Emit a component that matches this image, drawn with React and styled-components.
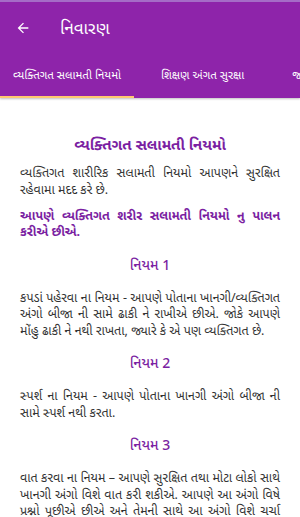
import React from "react";
import styled, { createGlobalStyle } from "styled-components";

const Global = createGlobalStyle`
  html, body {
    margin: 0;
    padding: 0;
    background: #ffffff;
  }
  body {
    font-family: "Noto Sans", "Noto Sans Gujarati", "Lohit Gujarati", sans-serif;
    width: 300px;
    height: 517px;
    overflow: hidden;
  }
`;

const tabs = ["વ્યક્તિગત સલામતી નિયમો", "શિક્ષણ અંગત સુરક્ષા", "જાતીય શોષણ"];

function App() {
  return (
    <Screen>
      <Global />
      <Header>
        <StatusStrip />
        <Toolbar>
          <BackButton aria-label="back">
            <svg width="16" height="16" viewBox="0 0 24 24">
              <path
                d="M20 11H7.83l5.59-5.59L12 4l-8 8 8 8 1.41-1.41L7.83 13H20v-2z"
                fill="#fff"
              />
            </svg>
          </BackButton>
          <Title>નિવારણ</Title>
        </Toolbar>
        <TabBar>
          {tabs.map((t, i) => (
            <Tab key={t} active={i === 0}>
              {t}
            </Tab>
          ))}
        </TabBar>
      </Header>
      <Content>
        <Heading>વ્યક્તિગત સલામતી નિયમો</Heading>
        <Para>
          વ્યક્તિગત શારીરિક સલામતી નિયમો આપણને સુરક્ષિત રહેવામા મદદ કરે છે.
        </Para>
        <Para strong>
          આપણે વ્યક્તિગત શરીર સલામતી નિયમો નુ પાલન કરીએ છીએ.
        </Para>
        <Heading small>નિયમ 1</Heading>
        <Para>
          કપડાં પહેરવા ના નિયમ - આપણે પોતાના ખાનગી/વ્યક્તિગત અંગો બીજા ની સામે
          ઢાકી ને રાખીએ છીએ. જોકે આપણે મોંહુ ઢાકી ને નથી રાખતા, જ્યારે કે એ પણ
          વ્યક્તિગત છે.
        </Para>
        <Heading small>નિયમ 2</Heading>
        <Para>
          સ્પર્શ ના નિયમ - આપણે પોતાના ખાનગી અંગો બીજા ની સામે સ્પર્શ નથી કરતા.
        </Para>
        <Heading small>નિયમ 3</Heading>
        <Para>
          વાત કરવા ના નિયમ – આપણે સુરક્ષિત તથા મોટા લોકો સાથે ખાનગી અંગો વિશે
          વાત કરી શકીએ. આપણે આ અંગો વિષે પ્રશ્નો પૂછીએ છીએ અને તેમની સાથે આ
          અંગો વિશે ચર્ચા કરીએ છીએ.
        </Para>
      </Content>
    </Screen>
  );
}

const Screen = styled.div`
  width: 300px;
  height: 517px;
  overflow: hidden;
  background: #fff;
`;

const Header = styled.header`
  background: #8e24aa;
  box-shadow: 0 1px 2px rgba(0, 0, 0, 0.25);
`;

const StatusStrip = styled.div`
  height: 2px;
  background: #a56cc7;
`;

const Toolbar = styled.div`
  height: 52px;
  display: flex;
  align-items: center;
  padding: 0 0 0 15px;
`;

const BackButton = styled.div`
  width: 16px;
  height: 16px;
  display: flex;
  align-items: center;
  justify-content: center;
  margin-right: 29px;
`;

const Title = styled.div`
  color: #fff;
  font-size: 17px;
`;

const TabBar = styled.div`
  height: 44px;
  display: flex;
  white-space: nowrap;
  overflow: hidden;
`;

const Tab = styled.div`
  flex: none;
  padding: 0 13px;
  width: ${(p) => (p.active ? "134px" : "auto")};
  box-sizing: border-box;
  display: flex;
  align-items: center;
  color: #fff;
  font-size: 11.5px;
  margin-right: ${(p) => (p.active ? "14px" : "22px")};
  border-bottom: 2px solid ${(p) => (p.active ? "#ffc870" : "transparent")};
`;

const Content = styled.main`
  padding: 36px 20px 0;
`;

const Heading = styled.h2`
  margin: 0 0 ${(p) => (p.small ? "15px" : "11px")};
  text-align: center;
  color: #7b1fa2;
  font-size: ${(p) => (p.small ? "14px" : "15px")};
  line-height: 20px;
  font-weight: ${(p) => (p.small ? 500 : 700)};
`;

const Para = styled.p`
  margin: 0 0 14px;
  color: ${(p) => (p.strong ? "#7b1fa2" : "#333")};
  font-weight: ${(p) => (p.strong ? 700 : 400)};
  font-size: 12.5px;
  line-height: 16.5px;
  text-align: justify;

  & + & {
    margin-top: -4.5px;
  }
`;

export default App;
